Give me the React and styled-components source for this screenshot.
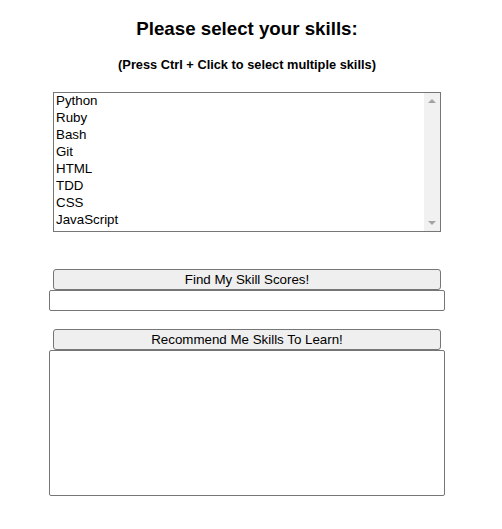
import React from "react";
import styled, { createGlobalStyle } from "styled-components";

const GlobalStyle = createGlobalStyle`
  body {
    margin: 0;
    background: #ffffff;
    font-family: "Liberation Sans", Arial, sans-serif;
    color: #000000;
  }
`;

const Page = styled.div`
  width: 400px;
  margin-left: 47px;
  padding-top: 18px;
  display: flex;
  flex-direction: column;
  align-items: center;
`;

const Title = styled.h3`
  margin: 0;
  font-size: 18.72px;
  font-weight: bold;
  line-height: 22px;
`;

const Hint = styled.h5`
  margin: 17px 0 0;
  font-size: 12.8px;
  font-weight: bold;
  line-height: 15px;
`;

const ListFrame = styled.div`
  margin-top: 20px;
  width: 388px;
  height: 140px;
  box-sizing: border-box;
  border: 1px solid #767676;
  display: flex;
  background: #ffffff;
`;

const SkillList = styled.select`
  flex: 1;
  height: 100%;
  font-family: "Liberation Sans", Arial, sans-serif;
  font-size: 13.33px;
  color: #000000;
  border: none;
  overflow: hidden;
  padding: 0;
  margin: 0;
  outline: none;
`;

const ScrollTrack = styled.div`
  width: 16px;
  background: #f1f1f1;
  display: flex;
  flex-direction: column;
  justify-content: space-between;
  align-items: center;
  padding: 6px 0;
  box-sizing: border-box;
`;

const Arrow = styled.span`
  width: 0;
  height: 0;
  border-left: 4px solid transparent;
  border-right: 4px solid transparent;
  ${(p) =>
    p.$down
      ? "border-top: 4px solid #a3a3a3;"
      : "border-bottom: 4px solid #a3a3a3;"}
`;

const ActionButton = styled.button`
  margin-top: ${(p) => p.$gap}px;
  width: 388px;
  height: 21px;
  box-sizing: border-box;
  font-family: "Liberation Sans", Arial, sans-serif;
  font-size: 13.33px;
  color: #000000;
  background: #efefef;
  border: 1px solid #767676;
  border-radius: 3px;
  padding: 1px 6px;
`;

const Output = styled.div`
  width: 396px;
  height: ${(p) => p.$height}px;
  box-sizing: border-box;
  border: 1px solid #767676;
  border-radius: 2px;
  background: #ffffff;
`;

const skills = ["Python", "Ruby", "Bash", "Git", "HTML", "TDD", "CSS", "JavaScript"];

export default function App() {
  return (
    <>
      <GlobalStyle />
      <Page>
        <Title>Please select your skills:</Title>
        <Hint>(Press Ctrl + Click to select multiple skills)</Hint>
        <ListFrame>
          <SkillList multiple size={8} defaultValue={[]}>
            {skills.map((s) => (
              <option key={s} value={s}>
                {s}
              </option>
            ))}
          </SkillList>
          <ScrollTrack>
            <Arrow />
            <Arrow $down />
          </ScrollTrack>
        </ListFrame>
        <ActionButton $gap={37}>Find My Skill Scores!</ActionButton>
        <Output $height={21} />
        <ActionButton $gap={18}>Recommend Me Skills To Learn!</ActionButton>
        <Output $height={146} />
      </Page>
    </>
  );
}
